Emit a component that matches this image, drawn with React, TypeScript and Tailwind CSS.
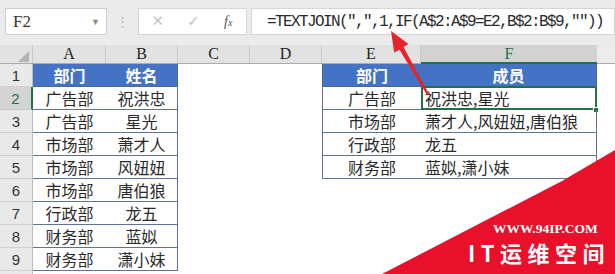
import React from "react";

const cjk = { fontFamily: '"Noto Sans CJK SC", "Noto Sans", sans-serif' };
const mono = { fontFamily: '"Liberation Mono", "DejaVu Sans Mono", monospace' };
const serif = { fontFamily: '"Liberation Serif", "DejaVu Serif", serif' };

const left = [
  ["广告部", "祝洪忠"],
  ["广告部", "星光"],
  ["市场部", "萧才人"],
  ["市场部", "风妞妞"],
  ["市场部", "唐伯狼"],
  ["行政部", "龙五"],
  ["财务部", "蓝姒"],
  ["财务部", "潇小妹"],
];

const right = [
  ["广告部", "祝洪忠,星光"],
  ["市场部", "萧才人,风妞妞,唐伯狼"],
  ["行政部", "龙五"],
  ["财务部", "蓝姒,潇小妹"],
];

function RowHead({ n }: { n: number }) {
  const sel = n === 2;
  return (
    <div
      className={
        sel
          ? "w-[33px] shrink-0 h-full flex items-center justify-center bg-[#d4d4d4] text-[#217346] border-r-2 border-r-[#217346] border-b border-b-[#c8c8c8] text-[15px]"
          : "w-[33px] shrink-0 h-full flex items-center justify-center bg-[#e9e9e9] text-[#333] border-r border-r-[#bdbdbd] border-b border-b-[#d0d0d0] text-[15px]"
      }
      style={{ fontFamily: '"Liberation Sans", sans-serif' }}
    >
      {n}
    </div>
  );
}

export default function App() {
  const rows = [1, 2, 3, 4, 5, 6, 7, 8, 9];
  return (
    <div className="relative w-[615px] h-[274px] overflow-hidden bg-white">
      {/* formula bar */}
      <div className="h-[45px] bg-[#ebebeb] flex items-start pt-[8px] pl-[5px]">
        <div className="w-[102px] h-[27px] bg-white border border-[#cfcfcf] flex items-center pl-[7px] pr-[6px] justify-between">
          <span className="text-[17px] text-[#333]" style={serif}>F2</span>
          <span className="text-[9px] text-[#8a8a8a]">▼</span>
        </div>
        <div className="w-[31px] h-[27px] flex items-center justify-center text-[#b5b5b5] text-[13px]">⋮</div>
        <div className="w-[109px] h-[27px] bg-white border border-[#d6d6d6] flex items-center">
          <span className="w-[38px] text-center text-[#c4c4c4] text-[15px]" style={{ fontFamily: '"DejaVu Sans", sans-serif' }}>✕</span>
          <span className="w-[34px] text-center text-[#c4c4c4] text-[15px]" style={{ fontFamily: '"DejaVu Sans", sans-serif' }}>✓</span>
          <span className="w-[36px] text-center text-[#555] text-[14px] italic" style={serif}>
            f<span className="text-[10px]">x</span>
          </span>
        </div>
        <div className="ml-[4px] flex-1 h-[27px] bg-white border border-[#d6d6d6] flex items-center pl-[15px] whitespace-nowrap">
          <span className="text-[16px] text-[#2a2a2a] tracking-[-1.6px]" style={mono}>
            =TEXTJOIN(″,″,1,IF(A$2:A$9=E2,B$2:B$9,″″))
          </span>
        </div>
      </div>

      {/* column headers */}
      <div className="flex h-[19px] bg-[#e2e2e2] border-b border-[#ababab] text-[16px] text-[#222]" style={serif}>
        <div className="w-[33px] shrink-0 h-full border-r border-[#c8c8c8] flex items-end justify-end pr-[3px] pb-[1px]">
          <svg width="11" height="11" viewBox="0 0 11 11">
            <polygon points="11,0 11,11 0,11" fill="#b3b3b3" />
          </svg>
        </div>
        <div className="w-[73px] shrink-0 h-full border-r border-[#c8c8c8] flex items-center justify-center">A</div>
        <div className="w-[72px] shrink-0 h-full border-r border-[#c8c8c8] flex items-center justify-center">B</div>
        <div className="w-[72px] shrink-0 h-full border-r border-[#c8c8c8] flex items-center justify-center">C</div>
        <div className="w-[72px] shrink-0 h-full border-r border-[#c8c8c8] flex items-center justify-center">D</div>
        <div className="w-[99px] shrink-0 h-full border-r border-[#c8c8c8] flex items-center justify-center">E</div>
        <div className="w-[176px] shrink-0 h-[19px] bg-[#d2d2d2] border-b-2 border-[#217346] text-[#217346] flex items-center justify-center">F</div>
        <div className="flex-1 h-full bg-[#ececec]"></div>
      </div>

      {/* rows */}
      <div className="flex flex-col" style={cjk}>
        {rows.map((r) => {
          const l = r === 1 ? null : left[r - 2];
          const rt = r >= 2 && r <= 5 ? right[r - 2] : null;
          return (
            <div key={r} className="flex h-[23px] text-[16px] leading-[23px]">
              <RowHead n={r} />
              {r === 1 ? (
                <>
                  <div className="w-[73px] shrink-0 h-full bg-[#4472c4] text-white font-bold text-center border-b border-[#4f6785]">部门</div>
                  <div className="w-[72px] shrink-0 h-full bg-[#4472c4] text-white font-bold text-center border-b border-r border-[#4f6785]">姓名</div>
                </>
              ) : (
                <>
                  <div className="w-[73px] shrink-0 h-full text-[#2a2a2a] text-center border-b border-[#5d7592]">{l![0]}</div>
                  <div className="w-[72px] shrink-0 h-full text-[#2a2a2a] text-center border-b border-r border-[#5d7592]">{l![1]}</div>
                </>
              )}
              <div className="w-[72px] shrink-0 h-full"></div>
              <div className="w-[72px] shrink-0 h-full"></div>
              {r === 1 ? (
                <>
                  <div className="w-[99px] shrink-0 h-full bg-[#4472c4] text-white font-bold text-center border-l border-b border-[#4f6785]">部门</div>
                  <div className="w-[176px] shrink-0 h-full bg-[#4472c4] text-white font-bold text-center border-r border-b border-[#4f6785]">成员</div>
                </>
              ) : rt ? (
                <>
                  <div className="w-[99px] shrink-0 h-full text-[#2a2a2a] text-center border-l border-b border-[#5d7592]">{rt[0]}</div>
                  <div className="relative w-[176px] shrink-0 h-full text-[#2a2a2a] pl-[4px] border-r border-b border-[#5d7592] whitespace-nowrap">
                    {rt[1]}
                    {r === 2 && (
                      <>
                        <div className="absolute left-0 top-[-1px] w-[176px] h-[24px] border-2 border-[#217346]"></div>
                        <div className="absolute right-[-3px] bottom-[-4px] w-[6px] h-[6px] bg-[#217346] border border-white"></div>
                      </>
                    )}
                  </div>
                </>
              ) : (
                <>
                  <div className="w-[99px] shrink-0 h-full"></div>
                  <div className="w-[176px] shrink-0 h-full"></div>
                </>
              )}
              <div className="flex-1 h-full"></div>
            </div>
          );
        })}
        <div className="flex h-[3px]">
          <div className="w-[33px] h-full bg-[#e9e9e9] border-r border-[#bdbdbd]"></div>
        </div>
      </div>

      {/* red arrow */}
      <svg className="absolute left-0 top-0 pointer-events-none" width="615" height="274">
        <polygon points="391,31 408.5,44 403.5,47 429,94 427,95 399.5,49.8 394.2,52.6" fill="#e5232b" />
      </svg>

      {/* watermark */}
      <svg className="absolute left-0 top-0 pointer-events-none" width="615" height="274">
        <polygon points="382,274 562,181 615,150 615,274" fill="#e8102a" />
      </svg>
      <div
        className="absolute left-[493px] top-[222px] text-white font-bold text-[13.5px] leading-none whitespace-nowrap"
        style={serif}
      >
        WWW.94IP.COM
      </div>
      <div
        className="absolute left-[468px] top-[241px] text-white font-bold text-[22px] leading-none tracking-[5.5px] whitespace-nowrap"
        style={cjk}
      >
        IT运维空间
      </div>
    </div>
  );
}
